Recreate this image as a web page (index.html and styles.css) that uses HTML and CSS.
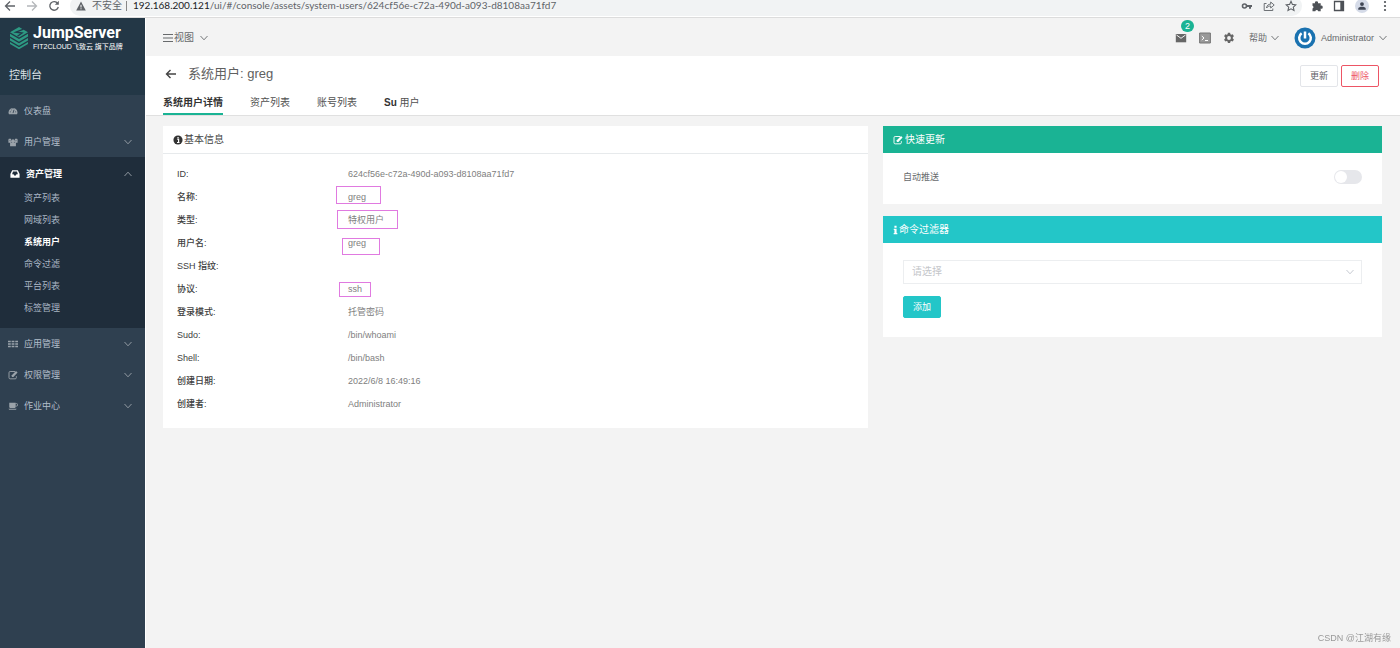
FILE: index.html
```html
<!DOCTYPE html>
<html lang="zh-CN">
<head>
<meta charset="utf-8">
<title>JumpServer</title>
<link rel="stylesheet" href="styles.css">
</head>
<body>
<svg class="defs" aria-hidden="true">
  <symbol id="chev" viewBox="0 0 10 10"><path d="M1.5 3 5 6.8 8.500 3" fill="none" stroke="currentColor" stroke-width=".9"/></symbol>
  <symbol id="edit" viewBox="0 0 12 12"><path d="M8.400 1.800H2.600A1.400 1.400 0 0 0 1.200 3.200v6a1.400 1.400 0 0 0 1.400 1.400h6A1.400 1.400 0 0 0 10 9.200V7.400" fill="none" stroke="currentColor" stroke-width="1.100"/><path d="M4.600 8.300V6.200L9.600 1.200l1.900 1.900-5 5.200z" fill="currentColor"/></symbol>
</svg>
<div class="browser">
  <button class="bi" aria-label="后退"><svg viewBox="0 0 12 12"><path d="M11 6H2M6 1.500 1.500 6 6 10.500" fill="none" stroke="#5f6368" stroke-width="1.300"/></svg></button>
  <button class="bi" aria-label="前进"><svg viewBox="0 0 12 12"><path d="M1 6h9M6 1.500 10.500 6 6 10.500" fill="none" stroke="#b4b7ba" stroke-width="1.300"/></svg></button>
  <button class="bi" aria-label="刷新"><svg viewBox="0 0 12 12"><path d="M9.700 3.500A4.300 4.300 0 1 0 10.300 7" fill="none" stroke="#5f6368" stroke-width="1.300"/><path d="M10.800.8v4H6.800z" fill="#5f6368"/></svg></button>
  <div class="omnibox">
    <svg class="warn" viewBox="0 0 10 10"><path d="M5 .5 9.800 9.500H.2z" fill="#5f6368"/><path d="M5 3.800v2.700M5 7.300v1" stroke="#fff" stroke-width="1"/></svg>
    <span class="unsafe">不安全</span>
    <span class="url"><b>192.168.200.121</b>/ui/#/console/assets/system-users/624cf56e-c72a-490d-a093-d8108aa71fd7</span>
    <span class="omni-icons">
      <svg viewBox="0 0 12 12"><path d="M5.500 5H11v2h-1v1.800H8V7H5.500z" fill="#5f6368"/><circle cx="3.500" cy="6" r="2" fill="none" stroke="#5f6368" stroke-width="1.600"/></svg>
      <svg viewBox="0 0 12 12"><path d="M3.500 3.500H1.200v7h8.600V8.500M3.500 8c.4-2.800 2-3.800 4.200-3.800V2L11.200 5 7.700 8V6C6 6 4.600 6.500 3.500 8z" fill="none" stroke="#5f6368" stroke-width=".9"/></svg>
      <svg viewBox="0 0 12 12"><path d="m6 1.300 1.400 3.100 3.400.4-2.500 2.300.7 3.400L6 8.800l-3 1.700.7-3.400L1.200 4.800l3.400-.4z" fill="none" stroke="#5f6368" stroke-width="1.100"/></svg>
    </span>
  </div>
  <div class="ext">
    <svg viewBox="0 0 12 12"><path d="M1.500 3.200h2.600a1.500 1.500 0 1 1 2.800 0h2.800v2.600a1.500 1.500 0 1 1 0 2.800v2.600H7.200a1.500 1.500 0 0 0-2.900 0H1.500V8.600a1.500 1.500 0 0 0 0-2.800z" fill="#4d5156"/></svg>
    <svg viewBox="0 0 12 12"><path d="M1.500 1.500h9v9h-9z" fill="none" stroke="#4d5156" stroke-width="1.300"/><path d="M7.300 1.500h3.200v9H7.300z" fill="#4d5156"/></svg>
    <span class="profile"><svg viewBox="0 0 12 12"><circle cx="6" cy="3.700" r="2.300" fill="#3f4654"/><path d="M1.500 10.500V9.200C1.500 7.500 4 6.900 6 6.900s4.500.6 4.500 2.300v1.300z" fill="#3f4654"/></svg></span>
    <svg viewBox="0 0 12 12"><circle cx="6" cy="2" r="1.100" fill="#4d5156"/><circle cx="6" cy="6" r="1.100" fill="#4d5156"/><circle cx="6" cy="10" r="1.100" fill="#4d5156"/></svg>
  </div>
</div>
<div class="app">
  <aside class="sidebar">
    <div class="brand">
      <div class="logo">
        <svg class="mark" viewBox="0 0 20 24"><path d="M10 1 19 6.200 10 11.500 1 6.200z" fill="#2d9a83"/><path d="M1 7.800 10 13l9-5.200v2.700L10 15.700 1 10.500zM1 12l9 5.200 9-5.200v2.600l-9 5.200-9-5.200zM1 16l9 5.200 9-5.200v1.900L10 23.200 1 17.900z" fill="#2d9a83"/><path d="m14.500 3.200-7.500 3 6 .8-4.500 3.200" fill="none" stroke="#22384a" stroke-width="1.400"/></svg>
        <div><div class="name">JumpServer</div><div class="sub">FIT2CLOUD飞致云 旗下品牌</div></div>
      </div>
      <div class="console">控制台</div>
    </div>
    <nav>
      <a class="item" href="#"><svg viewBox="0 0 12 12"><path d="M1.200 10A5.300 5.300 0 1 1 10.800 10z" fill="currentColor"/><path d="M6 8.500 7.200 4.500M2.300 7h1M3.500 4l.7.700M6 2.700v.9M8.700 7h1" stroke="#2f4050" stroke-width="1"/></svg><span>仪表盘</span></a>
      <a class="item" href="#"><svg viewBox="0 0 12 12"><path d="M1 2.200h2.500L4 4.500H0zM8.500 2.200H11l1 2.300H8zM.5 4.800h3v2h-3zM8.500 4.800h3v2h-3zM2.500 7h7v4h-7z" fill="currentColor"/><circle cx="6" cy="5" r="2.300" fill="currentColor"/></svg><span>用户管理</span><svg class="chev"><use href="#chev"/></svg></a>
      <div class="group">
        <a class="item open" href="#"><svg viewBox="0 0 12 12"><path d="M2.600 1.500h6.800L11.500 6v4.500H.5V6zM3.600 3 2.500 6.200h1.800l.6 1.500h2.200l.6-1.500h1.800L8.400 3z" fill="currentColor" fill-rule="evenodd"/></svg><span>资产管理</span><svg class="chev up"><use href="#chev"/></svg></a>
        <a class="subitem" href="#">资产列表</a>
        <a class="subitem" href="#">网域列表</a>
        <a class="subitem current" href="#">系统用户</a>
        <a class="subitem" href="#">命令过滤</a>
        <a class="subitem" href="#">平台列表</a>
        <a class="subitem" href="#">标签管理</a>
      </div>
      <a class="item" href="#"><svg viewBox="0 0 12 12"><path d="M0 2h3.300v2H0zM4.300 2h3.400v2H4.300zM8.700 2H12v2H8.700zM0 5h3.300v2H0zM4.300 5h3.400v2H4.300zM8.700 5H12v2H8.700zM0 8h3.300v2H0zM4.300 8h3.400v2H4.300zM8.700 8H12v2H8.700z" fill="currentColor"/></svg><span>应用管理</span><svg class="chev"><use href="#chev"/></svg></a>
      <a class="item" href="#"><svg><use href="#edit"/></svg><span>权限管理</span><svg class="chev"><use href="#chev"/></svg></a>
      <a class="item" href="#"><svg viewBox="0 0 12 12"><path d="M1.500 2h7.700v4.800c0 1-.7 1.700-1.700 1.700H3.200c-1 0-1.700-.7-1.700-1.700zM.5 9.300h10l-1 1.200h-8z" fill="currentColor"/><path d="M9 3h1a1.500 1.500 0 0 1 0 3.200H9" fill="none" stroke="currentColor"/></svg><span>作业中心</span><svg class="chev"><use href="#chev"/></svg></a>
    </nav>
  </aside>
  <main>
    <header class="topbar">
      <button class="view"><svg viewBox="0 0 10 10"><path d="M0 1.500h10M0 5h10M0 8.500h10" stroke="currentColor" stroke-width="1.200"/></svg>视图<svg class="chev"><use href="#chev"/></svg></button>
      <div class="tools">
        <button class="tool" aria-label="消息"><svg viewBox="0 0 12 12"><path d="M.8 2h10.400v8.300H.8z" fill="#666"/><path d="m1.500 3 4.500 3.300L10.500 3" fill="none" stroke="#f2f2f2"/></svg><span class="badge">2</span></button>
        <button class="tool" aria-label="终端"><svg viewBox="0 0 12 12"><path d="M.6 1h10.800v10H.6z" fill="#999" stroke="#777"/><path d="m2.800 4 2.200 2-2.200 2M6 8.500h3" fill="none" stroke="#fff"/></svg></button>
        <button class="tool" aria-label="设置"><svg viewBox="0 0 12 12"><path d="M4.900.8h2.200l.3 1.400 1 .6 1.400-.5 1.100 1.900-1.100 1v1.300l1.100 1-1.100 1.900-1.400-.4-1 .6-.3 1.500H4.900l-.3-1.500-1-.6-1.400.4-1.100-1.900 1.100-1V5.200l-1.100-1 1.100-1.900 1.400.5 1-.6zM6 4.100a1.900 1.900 0 1 0 0 3.800 1.900 1.900 0 0 0 0-3.800z" fill="#666" fill-rule="evenodd"/></svg></button>
        <button class="help">帮助<svg class="chev"><use href="#chev"/></svg></button>
        <button class="user"><svg class="avatar" viewBox="0 0 22 22"><circle cx="11" cy="11" r="10.500" fill="#1a72b0"/><path d="M7.600 6.300a5.800 5.800 0 1 0 6.800 0M11 4.500v7" fill="none" stroke="#fff" stroke-width="2.500"/></svg>Administrator<svg class="chev"><use href="#chev"/></svg></button>
      </div>
    </header>
    <section class="pagehead">
      <div class="titlerow">
        <button class="back" aria-label="返回"><svg viewBox="0 0 12 12"><path d="M11 6H2M5.500 2 1.500 6l4 4" fill="none" stroke="#444" stroke-width="1.400"/></svg></button>
        <h1>系统用户: greg</h1>
        <button class="btn">更新</button>
        <button class="btn danger">删除</button>
      </div>
      <div class="tabs">
        <a class="tab active" href="#">系统用户详情</a>
        <a class="tab" href="#">资产列表</a>
        <a class="tab" href="#">账号列表</a>
        <a class="tab" href="#"><b>Su</b> 用户</a>
      </div>
    </section>
    <div class="content">
      <section class="panel">
        <h2><svg viewBox="0 0 12 12"><circle cx="6" cy="6" r="5.500" fill="#333"/><path d="M5 5h1.700v3.500M4.800 9h3M5.300 3h1.500" fill="none" stroke="#fff" stroke-width="1.400"/></svg>基本信息</h2>
        <dl>
          <dt>ID:</dt><dd>624cf56e-c72a-490d-a093-d8108aa71fd7</dd>
          <dt>名称:</dt><dd>greg<i class="mark-name"></i></dd>
          <dt>类型:</dt><dd>特权用户<i class="mark-type"></i></dd>
          <dt>用户名:</dt><dd>greg<i class="mark-user"></i></dd>
          <dt>SSH 指纹:</dt><dd></dd>
          <dt>协议:</dt><dd>ssh<i class="mark-proto"></i></dd>
          <dt>登录模式:</dt><dd>托管密码</dd>
          <dt>Sudo:</dt><dd>/bin/whoami</dd>
          <dt>Shell:</dt><dd>/bin/bash</dd>
          <dt>创建日期:</dt><dd>2022/6/8 16:49:16</dd>
          <dt>创建者:</dt><dd>Administrator</dd>
        </dl>
      </section>
      <div class="side">
        <section class="panel">
          <h2 class="green"><svg><use href="#edit"/></svg>快速更新</h2>
          <div class="quick"><label for="push">自动推送</label><input type="checkbox" id="push" class="switch"></div>
        </section>
        <section class="panel">
          <h2 class="cyan"><svg class="info" viewBox="0 0 5 12"><path d="M1.200 1h2.600v2.200H1.200zM.4 4.500h3.400V9.500h.9V11H.3V9.500h.9V6H.4z" fill="#fff"/></svg>命令过滤器</h2>
          <div class="filter">
            <div class="selectbox"><select aria-label="命令过滤器"><option>请选择</option></select><svg class="chev"><use href="#chev"/></svg></div>
            <button class="btn add">添加</button>
          </div>
        </section>
      </div>
    </div>
  </main>
</div>
<div class="watermark">CSDN @江湖有缘</div>
</body>
</html>
```

FILE: styles.css
```css
* { box-sizing: border-box; }
body {
  margin: 0;
  min-height: 100vh;
  display: flex;
  flex-direction: column;
  font: 9px/12px "Liberation Sans", "Noto Sans CJK SC", sans-serif;
  color: #676a6c;
  background: #f3f3f3;
}
a { color: inherit; text-decoration: none; }
button { font: inherit; color: inherit; background: none; border: 0; padding: 0; display: flex; align-items: center; white-space: nowrap; }
svg { width: 12px; height: 12px; flex: none; display: block; }
.defs { position: absolute; width: 0; height: 0; }
.chev { width: 10px; height: 10px; }
.up { transform: rotate(180deg); }

.browser {
  height: 18px;
  padding: 0 9px 6px 4px;
  display: flex;
  align-items: center;
  overflow: hidden;
  background: #fff;
  border-bottom: 1px solid #dcdcdc;
}
.bi { margin-right: 10px; }
.omnibox {
  flex: 1;
  min-width: 0;
  height: 20px;
  padding: 0 5px;
  border-radius: 10px;
  background: #f1f3f4;
  display: flex;
  align-items: center;
  white-space: nowrap;
}
.warn { width: 10px; height: 10px; margin: 0 6px 0 1px; }
.unsafe { font-size: 10px; line-height: 10px; padding-right: 4px; border-right: 1px solid #888; margin-right: 6px; color: #5f6368; }
.url { flex: 1; font: 10px/11px Lato, sans-serif; color: #5f6368; }
.url b { font-weight: 400; color: #202124; }
.omni-icons { display: flex; gap: 10px; }
.ext { display: flex; align-items: center; gap: 10px; margin-left: 9px; }
.profile { width: 14px; height: 14px; border-radius: 50%; background: #d5dbe8; display: grid; place-items: center; }
.profile svg { width: 10px; height: 10px; }

.app { flex: 1; display: flex; }
.sidebar { width: 146px; flex: none; background: #2f4050; color: #b4bfcb; border-right: 1px solid #fff; }
.brand { height: 77px; padding: 6px 9px 0; background: #233746; color: #fff; }
.logo { display: flex; gap: 4px; align-items: center; }
.mark { width: 20px; height: 24px; }
.name { font: 700 16px/18px Roboto, sans-serif; }
.sub { font-size: 7px; line-height: 9px; white-space: nowrap; }
.console { margin-top: 17px; font-size: 11px; line-height: 14px; color: #dbe1e6; }
.item { display: flex; align-items: center; height: 31px; padding: 0 12px 0 8px; }
.item svg { width: 10px; height: 10px; color: #9ba3aa; }
.item span { margin-left: 6px; flex: 1; }
.group { background: #1f2d3b; padding: 4px 0 9px; }
.open { height: 26px; padding-left: 10px; color: #fff; font-weight: 700; }
.open svg:first-child { color: #fff; }
.subitem { display: block; padding-left: 24px; line-height: 22px; color: #a9b6c4; }
.current { color: #fff; font-weight: 700; }

main { flex: 1; min-width: 0; }
.topbar { height: 38px; padding: 2px 12px 0 17px; display: flex; align-items: center; justify-content: space-between; }
.view { font-size: 10px; }
.view svg:first-child { width: 10px; height: 10px; margin-right: 1px; }
.view .chev { margin-left: 5px; }
.tools { display: flex; align-items: center; }
.tool { position: relative; margin-right: 12px; }
.badge { position: absolute; left: 6px; top: -12px; width: 13px; height: 12px; border-radius: 6px; background: #1ab394; color: #fff; text-align: center; }
.help { margin: 0 14px 0 2px; }
.help .chev { margin-left: 3px; }
.avatar { width: 22px; height: 22px; margin-right: 5px; }
.user .chev { margin-left: 4px; }

.pagehead { background: #fff; padding: 8px 21px 0 17px; border-bottom: 1px solid #e0e0e0; }
.titlerow { display: flex; align-items: center; gap: 3px; height: 23px; }
.back { width: 15px; height: 19px; align-self: flex-start; justify-content: center; }
h1 { flex: 1; margin: 0 0 4px 7px; font-size: 13px; line-height: 16px; font-weight: 400; color: #606060; }
.btn { height: 22px; padding: 0 9px; border: 1px solid #e3e5e9; border-radius: 2px; background: #fff; color: #606266; }
.danger { color: #ed5565; border-color: #ed5565; }
.tabs { display: flex; gap: 27px; font-size: 10px; color: #505050; }
.tab { padding-top: 5px; line-height: 21px; border-bottom: 2px solid transparent; }
.tab b { color: #333; }
.active { font-weight: 700; color: #333; border-color: #1ab394; }

.content { display: grid; grid-template-columns: 705fr 499fr; gap: 15px; padding: 10px 18px 10px 17px; align-items: start; }
.panel { background: #fff; }
h2 { margin: 0; height: 28px; padding: 0 10px; display: flex; align-items: center; gap: 1px; font-size: 10px; font-weight: 400; color: #444; border-bottom: 1px solid #e7eaec; }
h2 svg { width: 10px; height: 10px; }
h2 .info { width: 5px; }
.green, .cyan { height: 27px; gap: 2px; color: #fff; border: 0; background: #1ab394; }
.cyan { gap: 1px; background: #23c6c8; }
dl { margin: 0; padding: 9px 14px 12px; display: grid; grid-template-columns: 171px 1fr; line-height: 23px; }
dt { font-weight: 500; color: #404040; }
dd { margin: 0; position: relative; color: #808080; }
dd i { position: absolute; border: 1px solid #e07ae0; }
.mark-name { left: -12px; top: 0; width: 45px; height: 18px; }
.mark-type { left: -11px; top: 1px; width: 61px; height: 19px; }
.mark-user { left: -6px; top: 6px; width: 38px; height: 17px; }
.mark-proto { left: -9px; top: 4px; width: 32px; height: 15px; }

.side { display: grid; gap: 12px; }
.quick { height: 51px; padding: 0 20px 3px; display: flex; align-items: center; justify-content: space-between; }
.switch { appearance: none; margin: 0; width: 28px; height: 14px; padding: 1px; border-radius: 7px; background: #e6e7eb; }
.switch::before { content: ""; display: block; width: 12px; height: 12px; border-radius: 50%; background: #fff; }
.filter { padding: 17px 20px 19px; }
.selectbox { position: relative; margin-bottom: 12px; color: #c0c4cc; }
select { appearance: none; width: 100%; height: 24px; padding: 0 8px; font: inherit; font-size: 10px; color: #c4c6ca; background: #fff; border: 1px solid #eceef0; border-radius: 0; display: block; }
.selectbox .chev { position: absolute; right: 7px; top: 7px; }
.add { background: #23c6c8; border-color: #23c6c8; color: #fff; }
.watermark { position: fixed; right: 9px; bottom: 4px; font-size: 9px; color: #999; }
```
